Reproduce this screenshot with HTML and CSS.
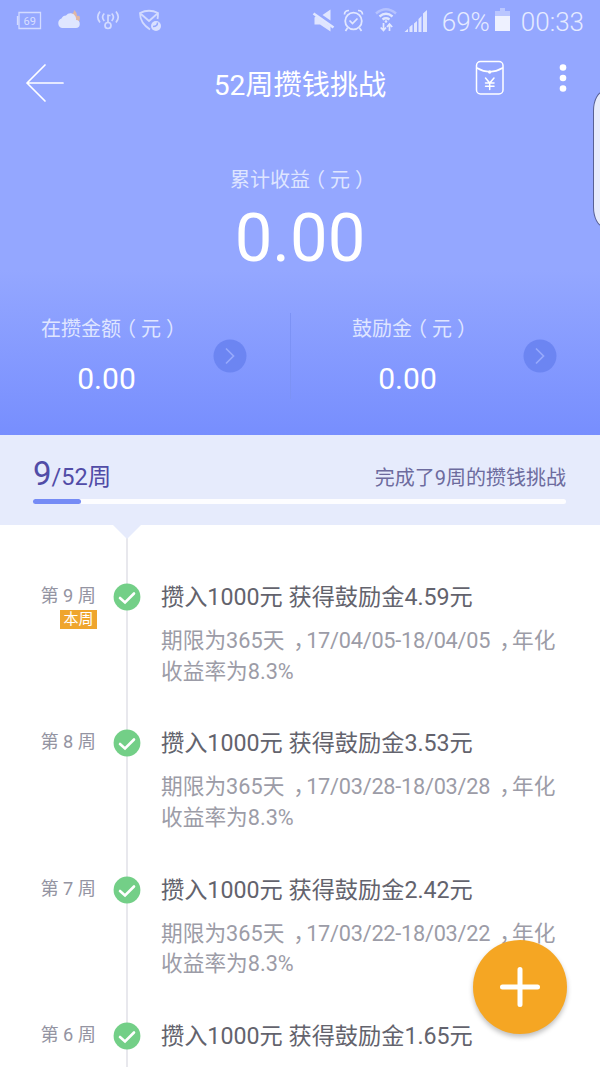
FILE: index.html
```html
<!DOCTYPE html>
<html lang="zh-CN">
<head>
<meta charset="utf-8">
<title>52周攒钱挑战</title>
<link rel="stylesheet" href="styles.css">
</head>
<body>
<div class="screen">
  <header class="hero">
    <div class="status">
      <svg class="status-left" width="170" height="40" viewBox="0 0 170 40" fill="none" stroke="#d3dbff">
        <path d="M19 12.500H40.500V28.500H19Z M17.500 16V25" stroke-width="1.300"/>
        <text class="battery-text" x="23.500" y="25">69</text>
        <path d="M69 14Q74 15 74 10Q77 12 77 16Q80 15 80 18L79 22L73 22Z" fill="#dfb7a6" stroke="none"/>
        <path d="M62 28a5 5 0 0 1-.5-9.500a5 5 0 0 1 4.500-3a5.500 5.500 0 0 1 9.500 1q1 2 .5 3.500a4 4 0 0 1-.5 8Z" fill="#dfe6ff" stroke="none"/>
        <g stroke-width="1.700"><path d="M100 11.500q-4.500 5.500 0 11M104.300 13.500q-3.500 3.500 0 7.500M116 11.500q4.500 5.500 0 11M111.700 13.500q3.500 3.500 0 7.500"/><circle cx="108" cy="25.500" r="3"/><path d="M108 22.500V14.500M108 15.500h2.500"/></g>
        <path d="M150 29.500Q140 23 140 13Q149 8.500 158 13Q158 17 157.500 19M141 14L149 21L157.500 13.500" stroke-width="1.800"/>
        <circle cx="156" cy="26" r="5" fill="#d9e0ff" stroke="none"/><path d="M153 26.500q4.500 0 4.500-4" stroke="#94a7ff" stroke-width="1.500"/>
      </svg>
      <div class="status-right">
        <svg width="118" height="40" viewBox="308 0 118 40" fill="none" stroke="#e1e7ff">
          <path d="M320.500 15L328.500 9.500V20.500ZM312.500 17.500V24.500H318L328.500 31.500V26.500L314 16Z" fill="#dfe5ff" stroke="none"/><path d="M311.500 13.500L331.500 27.500" stroke-width="2.600"/>
          <circle cx="351.500" cy="21" r="8.300" stroke-width="1.800"/><path d="M347.500 20.500l3 3l5-5M342.500 14.500q0-4 4.500-4M360.500 14.500q0-4-4.500-4M345.500 28l-2 3M357.500 28l2 3" stroke-width="1.700"/>
          <path d="M374 13.500Q384 5 394 13.500" stroke="#b5c2ff" stroke-width="2.500"/><path d="M377.500 16.500Q384 11 390.500 16.500M380.500 19.500Q384 17 387.500 19.500" stroke-width="2.300"/><circle cx="384" cy="21.500" r="1.300" fill="#e1e7ff" stroke="none"/>
          <path d="M381.500 23v7M378.700 27.500l2.800 3l2.500-3M387.500 31v-6.500M385 27l2.500-3l2.700 3" stroke-width="1.700"/>
          <path d="M402.500 32l3.500-3.200V32ZM407.500 32v-5l3-2.500V32ZM412 32V23.500l3-2.500V32ZM416.500 32V19l3-3V32ZM421 32V13.500l4-3.500V32Z" fill="#dfe5ff" stroke="none"/>
        </svg>
        <span class="status-text percent">69%</span>
        <svg class="battery" width="16" height="24" viewBox="0 0 16 24"><path d="M5 0H10V3H15V9H0V3H5Z" fill="#bac6ff"/><path d="M0 8H15V23H0Z" fill="#eef1ff"/></svg>
        <span class="status-text">00:33</span>
      </div>
    </div>

    <div class="appbar">
      <svg width="40" height="40" viewBox="0 0 40 40" fill="none" stroke="#fff" stroke-width="1.700" stroke-linecap="round" stroke-linejoin="round"><path d="M38 20H2M20 2L2 20L20 38"/></svg>
      <h1 class="title">52周攒钱挑战</h1>
      <div class="actions">
        <svg width="30" height="36" viewBox="0 0 30 36" fill="none" stroke="#fff" stroke-width="1.500" stroke-linecap="round"><rect x="1.500" y="1.500" width="26.500" height="32.500" rx="4"/><path d="M2 8Q14.700 15.500 27.500 8M10.500 18L14.700 23L19 18M14.700 23V29.500M10.500 23H19M10.500 26.200H19"/><circle cx="14.700" cy="12" r="1.700" fill="#fff" stroke="none"/></svg>
        <svg width="8" height="30" viewBox="0 0 8 30" fill="#fff"><circle cx="4" cy="4.500" r="3.300"/><circle cx="4" cy="15" r="3.300"/><circle cx="4" cy="25.500" r="3.300"/></svg>
      </div>
    </div>

    <div class="total">
      <div class="label">累计收益<span class="open">（</span>元<span class="close">）</span></div>
      <div class="total-value">0.00</div>
    </div>

    <div class="accounts">
      <div class="account first">
        <div class="figures"><div class="label">在攒金额<span class="open">（</span>元<span class="close">）</span></div><div class="value">0.00</div></div>
        <svg class="go" width="34" height="34" viewBox="0 0 34 34" fill="none"><circle cx="17" cy="17" r="16.500" fill="#6c85f2"/><path d="M13 9.500L20.500 17L13 24.500" stroke="#97a9fc" stroke-width="1.700"/></svg>
      </div>
      <div class="account">
        <div class="figures"><div class="label">鼓励金<span class="open">（</span>元<span class="close">）</span></div><div class="value">0.00</div></div>
        <svg class="go" width="34" height="34" viewBox="0 0 34 34" fill="none"><circle cx="17" cy="17" r="16.500" fill="#6c85f2"/><path d="M13 9.500L20.500 17L13 24.500" stroke="#97a9fc" stroke-width="1.700"/></svg>
      </div>
    </div>
    <div class="edge-handle"></div>
  </header>

  <section class="progress">
    <div class="progress-text">
      <div class="weeks"><span class="current">9</span>/52周</div>
      <div class="done">完成了9周的攒钱挑战</div>
    </div>
    <div class="track"><div class="bar"></div></div>
  </section>

  <main class="timeline">
    <svg class="notch" width="28" height="15" viewBox="0 0 28 15"><path d="M0 0H28L14 14Z" fill="#e6ebfc"/></svg>
    <article class="item">
      <div class="week">第 9 周<span class="badge">本周</span></div>
      <svg class="check" width="28" height="28" viewBox="0 0 28 28" fill="none"><circle cx="14" cy="14" r="13.400" fill="#73cf87"/><path d="M7 15L12 19.500L21 10.500" stroke="#fff" stroke-width="2.600" stroke-linecap="round"/></svg>
      <div class="content"><h2 class="deposit">攒入1000元 获得鼓励金4.59元</h2><p class="terms">期限为365天<span class="comma">，</span><span class="dates">17/04/05-18/04/05</span><span class="comma">，</span>年化<br>收益率为8.3%</p></div>
    </article>
    <article class="item">
      <div class="week">第 8 周</div>
      <svg class="check" width="28" height="28" viewBox="0 0 28 28" fill="none"><circle cx="14" cy="14" r="13.400" fill="#73cf87"/><path d="M7 15L12 19.500L21 10.500" stroke="#fff" stroke-width="2.600" stroke-linecap="round"/></svg>
      <div class="content"><h2 class="deposit">攒入1000元 获得鼓励金3.53元</h2><p class="terms">期限为365天<span class="comma">，</span><span class="dates">17/03/28-18/03/28</span><span class="comma">，</span>年化<br>收益率为8.3%</p></div>
    </article>
    <article class="item">
      <div class="week">第 7 周</div>
      <svg class="check" width="28" height="28" viewBox="0 0 28 28" fill="none"><circle cx="14" cy="14" r="13.400" fill="#73cf87"/><path d="M7 15L12 19.500L21 10.500" stroke="#fff" stroke-width="2.600" stroke-linecap="round"/></svg>
      <div class="content"><h2 class="deposit">攒入1000元 获得鼓励金2.42元</h2><p class="terms">期限为365天<span class="comma">，</span><span class="dates">17/03/22-18/03/22</span><span class="comma">，</span>年化<br>收益率为8.3%</p></div>
    </article>
    <article class="item">
      <div class="week">第 6 周</div>
      <svg class="check" width="28" height="28" viewBox="0 0 28 28" fill="none"><circle cx="14" cy="14" r="13.400" fill="#73cf87"/><path d="M7 15L12 19.500L21 10.500" stroke="#fff" stroke-width="2.600" stroke-linecap="round"/></svg>
      <div class="content"><h2 class="deposit">攒入1000元 获得鼓励金1.65元</h2></div>
    </article>
  </main>

  <button class="add" aria-label="添加"><svg width="42" height="42" viewBox="0 0 42 42" fill="none" stroke="#fff" stroke-width="5" stroke-linecap="round"><path d="M21 3.500V38.500M3.500 21H38.500"/></svg></button>
</div>
</body>
</html>
```
FILE: styles.css
```css
* { box-sizing: border-box; margin: 0; padding: 0; }
body { font-family: Roboto, "Noto Sans CJK SC", sans-serif; background: #fff; }
svg { display: block; flex: none; }
.screen { position: relative; width: 600px; height: 1067px; overflow: hidden; }

.hero { position: relative; height: 435px; overflow: hidden; background: linear-gradient(#94a7ff 0, #94a7ff 270px, #778efe 435px); color: #fff; }
.status { display: flex; justify-content: space-between; height: 40px; padding-right: 16px; }
.battery-text { font: 11px Roboto, sans-serif; fill: #d8dfff; stroke: none; }
.status-right { display: flex; align-items: center; }
.status-text { font-size: 26px; line-height: 40px; padding-top: 3px; color: #e6ebff; font-weight: 300; }
.percent { margin: 0 6px 0 14px; }
.battery { margin: 0 10px 0 -1px; }

.appbar { display: grid; grid-template-columns: 125px 1fr 117px; align-items: center; height: 86px; padding: 0 33px 0 25px; }
.title { padding-top: 5px; text-align: center; font-size: 28.200px; font-weight: 400; line-height: 40px; white-space: nowrap; }
.actions { display: flex; align-items: center; justify-content: flex-end; gap: 54px; padding-bottom: 10px; }

.total { display: flex; flex-direction: column; align-items: center; padding-top: 39px; }
.label { height: 28px; font-size: 20px; line-height: 28px; color: #dfe5ff; white-space: nowrap; }
.open, .close, .comma { font-family: "Noto Sans CJK SC", sans-serif; font-feature-settings: "halt" 1; }
.open { padding: 0 5px; }
.close { padding: 0 5px; }
.total-value { font-size: 67px; line-height: 90px; }

.accounts { display: grid; grid-template-columns: 291px 309px; height: 86px; margin-top: 30px; }
.account { display: flex; align-items: center; justify-content: space-between; padding: 0 43px 0 61px; }
.first { padding-left: 41px; border-right: 1px solid #7c92f5; }
.go { margin-top: 0; }
.figures { text-align: center; }
.value { font-size: 30px; line-height: 40px; margin-top: 17px; padding-right: 9px; }
.edge-handle { position: absolute; left: 593px; top: 91px; width: 24px; height: 136px; border: 1px solid #586094; border-radius: 11px / 20px; background: #e7ebfb; }

.progress { height: 90px; padding: 19px 34px 0 33px; background: #e6ebfc; }
.progress-text { display: flex; justify-content: space-between; align-items: baseline; height: 45px; line-height: 40px; }
.weeks { font-size: 23.500px; color: #514ca7; }
.current { font-size: 33px; }
.done { font-size: 20px; color: #6d6b9e; }
.track { height: 5px; border-radius: 3px; background: #fdfdff; }
.bar { width: 48px; height: 5px; border-radius: 3px; background: #758bf5; }

.timeline { position: relative; height: 542px; padding-top: 50px; background: linear-gradient(#e8e8ed, #e8e8ed) 126px 0 / 2px 100% no-repeat #fff; }
.notch { position: absolute; left: 113px; top: 0; }
.item { display: grid; grid-template-columns: 96px 28px 1fr; column-gap: 17px; height: 146.400px; }
.week { display: flex; flex-direction: column; align-items: flex-end; padding-top: 1px; font-size: 18.200px; line-height: 40px; color: #9494a2; white-space: nowrap; }
.badge { width: 37px; height: 19px; margin: -6px -1px 0 0; background: #efa52d; color: #fff; font-size: 15px; line-height: 18px; text-align: center; }
.check { margin-top: 8px; }
.content { padding-left: 3px; }
.deposit { font-size: 23.200px; font-weight: 400; line-height: 44px; color: #63636d; white-space: nowrap; }
.terms { margin-top: 5px; font-size: 21.700px; line-height: 30.500px; color: #9c9ca7; white-space: nowrap; }
.comma { padding: 0 2px 0 9px; }
.dates { letter-spacing: -.24px; }

.add { position: absolute; left: 473px; top: 940px; display: flex; align-items: center; justify-content: center; width: 94px; height: 94px; border: 0; border-radius: 50%; background: #f5a623; box-shadow: 0 3px 5px rgba(0,0,0,.25); }
```
